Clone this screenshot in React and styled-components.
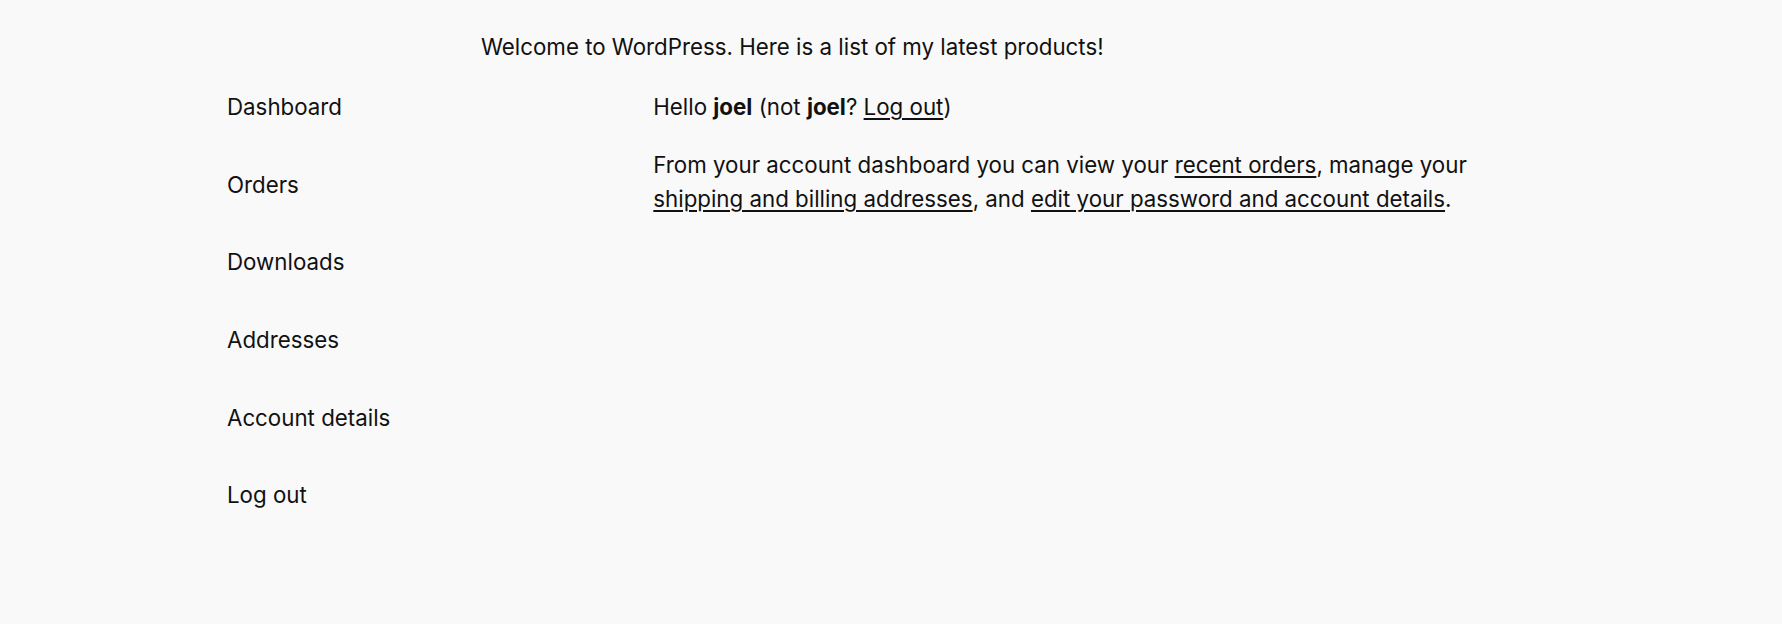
import React from "react";
import styled, { createGlobalStyle } from "styled-components";

const GlobalStyle = createGlobalStyle`
  body {
    margin: 0;
    background: #f9f9f9;
    color: #111111;
    font-family: Inter, "Noto Sans", sans-serif;
    font-size: 22.3px;
    line-height: 34px;
  }
`;

const navItems = [
  "Dashboard",
  "Orders",
  "Downloads",
  "Addresses",
  "Account details",
  "Log out",
];

function App() {
  return (
    <>
      <GlobalStyle />
      <Page>
        <Tagline>Welcome to WordPress. Here is a list of my latest products!</Tagline>
        <Account>
          <Nav>
            {navItems.map((item) => (
              <NavLink key={item} href="#">
                {item}
              </NavLink>
            ))}
          </Nav>
          <Content>
            <Para>
              Hello <strong>joel</strong> (not <strong>joel</strong>?{" "}
              <Link href="#">Log out</Link>)
            </Para>
            <Para>
              From your account dashboard you can view your{" "}
              <Link href="#">recent orders</Link>, manage your{" "}
              <Link href="#">shipping and billing addresses</Link>, and{" "}
              <Link href="#">edit your password and account details</Link>.
            </Para>
          </Content>
        </Account>
      </Page>
    </>
  );
}

export default App;

const Page = styled.div`
  min-height: 624px;
  padding: 30px 227px 0;
  box-sizing: border-box;
`;

const Tagline = styled.p`
  margin: 0 0 26px;
  padding-left: 254px;
`;

const Account = styled.div`
  display: flex;
  justify-content: space-between;
`;

const Nav = styled.nav`
  width: 30%;
  display: flex;
  flex-direction: column;
  gap: 43.7px;
`;

const NavLink = styled.a`
  color: inherit;
  text-decoration: none;
`;

const Content = styled.div`
  width: 67.9%;
`;

const Para = styled.p`
  margin: 0 0 24px;

  strong {
    font-weight: 700;
  }
`;

const Link = styled.a`
  color: inherit;
  text-decoration: underline;
  text-underline-offset: 3px;
  text-decoration-thickness: 1.5px;
`;
